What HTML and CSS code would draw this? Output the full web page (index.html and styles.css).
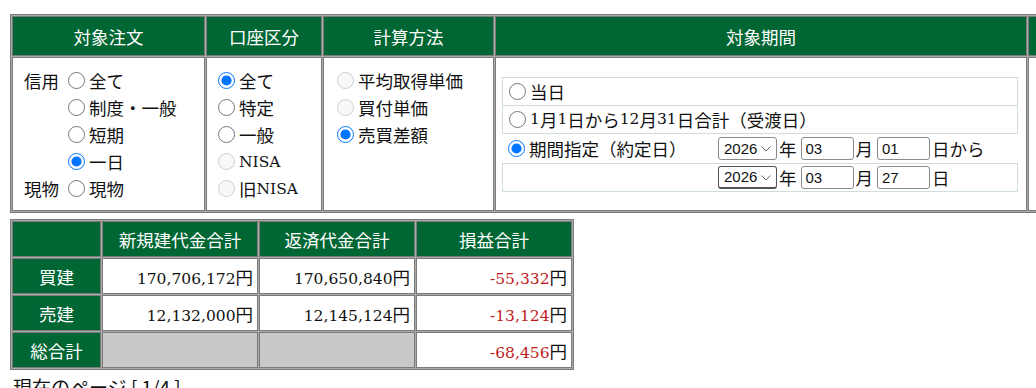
FILE: index.html
```html
<!DOCTYPE html>
<html lang="ja">
<head>
<meta charset="utf-8">
<title>損益</title>
<link rel="stylesheet" href="styles.css">
</head>
<body>
<table class="frame cond">
  <tr>
    <th class="w1">対象注文</th>
    <th class="w2">口座区分</th>
    <th class="w3">計算方法</th>
    <th class="w4">対象期間</th>
    <th class="w5"></th>
  </tr>
  <tr class="cond-body">
    <td class="opts pad-order">
      <div class="order">
        <span class="kind">信用</span><label class="opt"><input type="radio" name="order">全て</label>
        <span class="kind"></span><label class="opt"><input type="radio" name="order">制度・一般</label>
        <span class="kind"></span><label class="opt"><input type="radio" name="order">短期</label>
        <span class="kind"></span><label class="opt"><input type="radio" name="order" checked>一日</label>
        <span class="kind">現物</span><label class="opt"><input type="radio" name="order">現物</label>
      </div>
    </td>
    <td class="opts pad-acct">
      <label class="opt"><input type="radio" name="acct" checked>全て</label>
      <label class="opt"><input type="radio" name="acct">特定</label>
      <label class="opt"><input type="radio" name="acct">一般</label>
      <label class="opt"><input type="radio" name="acct" disabled><span class="lat">NISA</span></label>
      <label class="opt"><input type="radio" name="acct" disabled>旧<span class="lat">NISA</span></label>
    </td>
    <td class="opts pad-calc">
      <label class="opt"><input type="radio" name="calc" disabled>平均取得単価</label>
      <label class="opt"><input type="radio" name="calc" disabled>買付単価</label>
      <label class="opt"><input type="radio" name="calc" checked>売買差額</label>
    </td>
    <td class="period-cell">
      <div class="period">
        <div class="prow boxed first"><label class="opt"><input type="radio" name="period">当日</label></div>
        <div class="prow boxed"><label class="opt"><input type="radio" name="period"><span class="lat">1</span>月<span class="lat">1</span>日から<span class="lat">12</span>月<span class="lat">31</span>日合計（受渡日）</label></div>
        <div class="prow split">
          <label class="opt"><input type="radio" name="period" checked>期間指定（約定日）</label>
          <div class="dates">
            <span class="sel"><select class="year"><option>2026</option></select><svg class="chev" width="10" height="6" viewBox="0 0 10 6"><path d="M0.5 0.5 L5 5 L9.5 0.5" fill="none" stroke="#666" stroke-width="1"/></svg></span><span class="unit">年</span>
            <input class="num-in" type="text" value="03"><span class="unit">月</span>
            <input class="num-in" type="text" value="01"><span class="unit">日から</span>
          </div>
        </div>
        <div class="prow split boxed first">
          <span></span>
          <div class="dates">
            <span class="sel"><select class="year dark"><option>2026</option></select><svg class="chev" width="10" height="6" viewBox="0 0 10 6"><path d="M0.5 0.5 L5 5 L9.5 0.5" fill="none" stroke="#666" stroke-width="1"/></svg></span><span class="unit">年</span>
            <input class="num-in" type="text" value="03"><span class="unit">月</span>
            <input class="num-in" type="text" value="27"><span class="unit">日</span>
          </div>
        </div>
      </div>
    </td>
    <td></td>
  </tr>
</table>

<table class="frame summary">
  <tr>
    <th class="s1"></th>
    <th class="s2">新規建代金合計</th>
    <th class="s3">返済代金合計</th>
    <th class="s4">損益合計</th>
  </tr>
  <tr>
    <th>買建</th>
    <td class="val"><span class="lat">170,706,172</span>円</td>
    <td class="val"><span class="lat">170,650,840</span>円</td>
    <td class="val"><span class="lat neg">-55,332</span>円</td>
  </tr>
  <tr>
    <th>売建</th>
    <td class="val"><span class="lat">12,132,000</span>円</td>
    <td class="val"><span class="lat">12,145,124</span>円</td>
    <td class="val"><span class="lat neg">-13,124</span>円</td>
  </tr>
  <tr>
    <th>総合計</th>
    <td class="blank"></td>
    <td class="blank"></td>
    <td class="val"><span class="lat neg">-68,456</span>円</td>
  </tr>
</table>

<div class="pager">現在のページ [ 1/4 ]</div>
</body>
</html>
```

FILE: styles.css
```css
html {
  overflow: hidden;
}

body {
  margin: 0;
  padding: 14px 0 0 10px;
  font-family: "Noto Sans CJK JP", "DejaVu Serif", sans-serif;
  font-size: 17.5px;
  color: #111;
  background: #fff;
}

.lat {
  font-family: "DejaVu Serif", serif;
  font-size: 15.5px;
}

.frame {
  border-collapse: separate;
  border-spacing: 1px;
  border: 1px solid #7b7b7b;
  background: #a9a9a9;
  table-layout: fixed;
}

.frame th,
.frame td {
  box-sizing: border-box;
  border: 1px solid #7b7b7b;
  padding: 0;
}

.frame th {
  background: #006633;
  color: #fff;
  font-weight: normal;
  font-size: 17.5px;
  text-align: center;
}

.frame td {
  background: #fff;
}

/* condition table */
.cond {
  width: 1220px;
}

.cond th {
  height: 40px;
}

.w1 { width: 193px; }
.w2 { width: 116px; }
.w3 { width: 171px; }
.w4 { width: 532px; }
.w5 { width: 200px; }

.cond-body td {
  height: 154px;
}

.opts {
  vertical-align: top;
  padding-top: 9px !important;
}

.pad-order { padding-left: 11px !important; }
.pad-acct { padding-left: 11px !important; }
.pad-calc { padding-left: 13px !important; }

.order {
  display: grid;
  grid-template-columns: 44px auto;
}

.kind {
  height: 27px;
  line-height: 27px;
}

.opt {
  display: flex;
  align-items: center;
  height: 27px;
  white-space: nowrap;
}

.opt input[type="radio"] {
  width: 17px;
  height: 17px;
  margin: 0 4px 0 0;
  flex: none;
}

/* period */
.period-cell {
  vertical-align: middle;
  padding: 0 8px 0 6px !important;
}

.period {
  display: flex;
  flex-direction: column;
}

.prow {
  box-sizing: border-box;
  height: 28px;
  display: flex;
  align-items: center;
  padding-left: 6px;
}

.prow.boxed {
  border: 1px solid #cfdcdc;
  border-top: none;
  height: 28px;
}

.prow.boxed.first {
  border-top: 1px solid #cfdcdc;
  height: 29px;
}

.prow.split {
  display: grid;
  grid-template-columns: 210px auto;
  align-items: center;
  height: 29px;
}

.prow.split.boxed {
  padding-left: 5px;
}

.dates {
  display: flex;
  align-items: center;
}

.sel {
  position: relative;
  display: inline-flex;
}

.year {
  box-sizing: border-box;
  -webkit-appearance: none;
  appearance: none;
  width: 59px;
  height: 23px;
  font-family: "Liberation Sans", Arial, sans-serif;
  font-size: 15px;
  padding: 0 0 0 5px;
  border: 1px solid #8a8a8a;
  border-radius: 3px;
  background: #fff;
  color: #111;
  margin: 0;
}

.year.dark {
  border-color: #555;
  border-bottom-width: 2px;
}

.chev {
  position: absolute;
  right: 6px;
  top: 9px;
  pointer-events: none;
}

.unit {
  margin: 0 4px 0 2px;
}

.num-in {
  box-sizing: border-box;
  width: 53px;
  height: 23px;
  font-family: "Liberation Sans", Arial, sans-serif;
  font-size: 15px;
  padding: 0 0 0 4px;
  border: 1px solid #8a8a8a;
  border-radius: 3px;
  color: #111;
  margin: 0;
}

/* summary table */
.summary {
  margin-top: 6px;
  width: 564px;
}

.summary th,
.summary td {
  height: 36px;
}

.s1 { width: 89px; }
.s2 { width: 156px; }
.s3 { width: 156px; }
.s4 { width: 156px; }

.val {
  text-align: right;
  padding-right: 4px !important;
  white-space: nowrap;
}

.neg {
  color: #c01b1b;
}

.frame td.blank {
  background: #c9c9c9;
}

.pager {
  margin: 5px 0 0 3px;
  font-family: "Noto Sans CJK JP", sans-serif;
  font-size: 19px;
  line-height: 24px;
}
```
